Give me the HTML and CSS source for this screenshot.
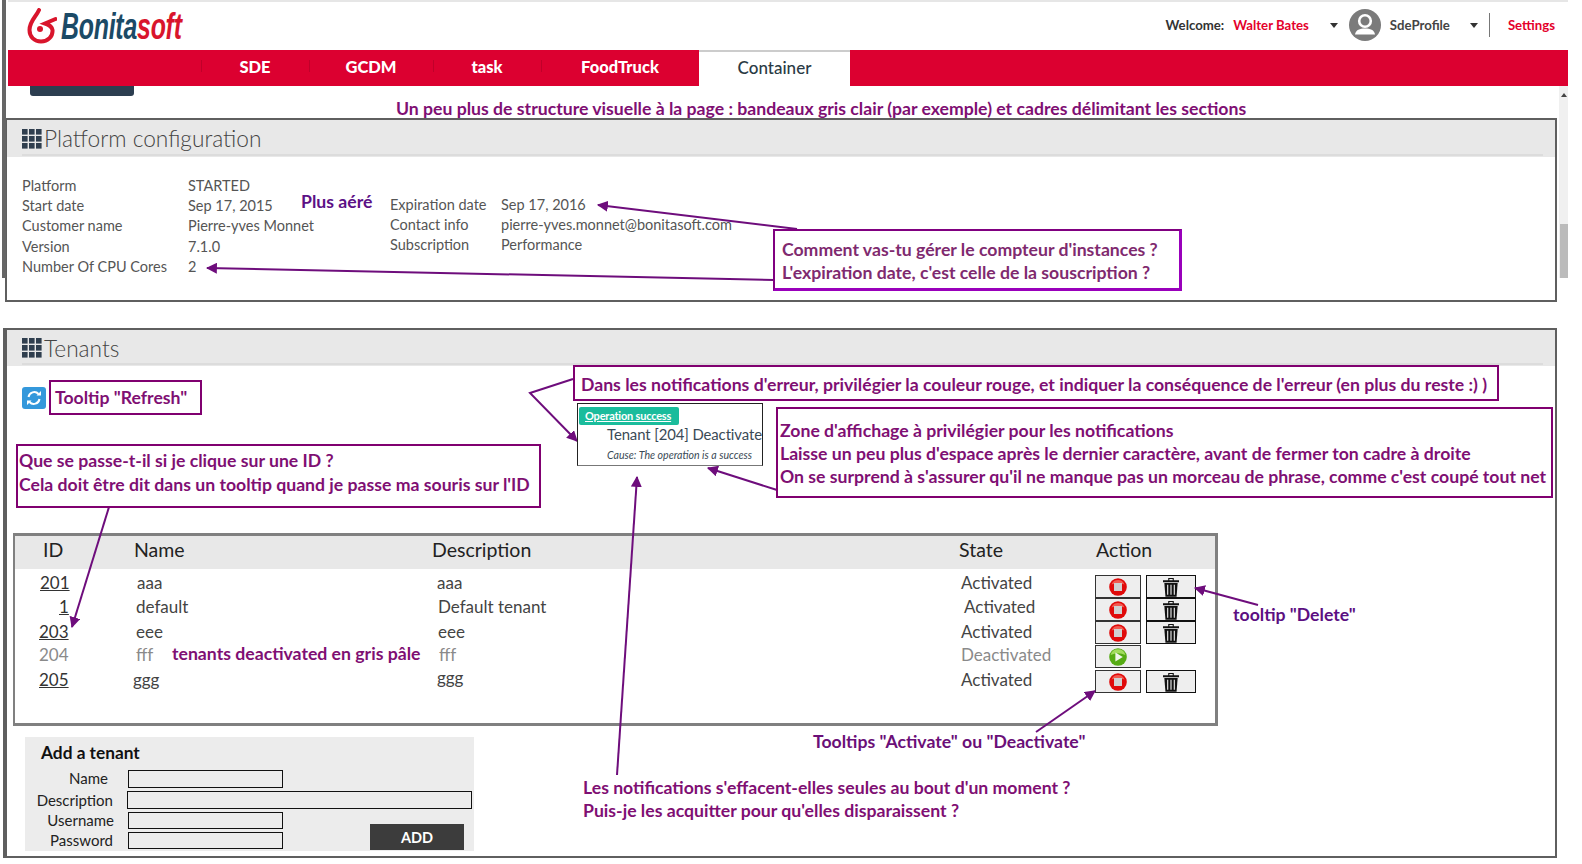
FILE: index.html
```html
<!DOCTYPE html>
<html lang="fr">
<head>
<meta charset="utf-8">
<title>Bonitasoft - Platform configuration</title>
<link rel="stylesheet" href="styles.css">
</head>
<body>
<svg class="defs" width="0" height="0" aria-hidden="true">
  <defs>
    <symbol id="grid" viewBox="0 0 20 20">
      <g fill="#2f3e4e">
        <rect x="0" y="0" width="5.6" height="5.6"/><rect x="7" y="0" width="5.6" height="5.6"/><rect x="14" y="0" width="5.6" height="5.6"/>
        <rect x="0" y="7" width="5.6" height="5.6"/><rect x="7" y="7" width="5.6" height="5.6"/><rect x="14" y="7" width="5.6" height="5.6"/>
        <rect x="0" y="14" width="5.6" height="5.6"/><rect x="7" y="14" width="5.6" height="5.6"/><rect x="14" y="14" width="5.6" height="5.6"/>
      </g>
    </symbol>
    <symbol id="stop" viewBox="0 0 18 18">
      <circle cx="9" cy="9" r="8.8" fill="#e00a0a"/>
      <path d="M2.5 6.5A7 7 0 0 1 15.5 6.5Q9 3.5 2.5 6.5Z" fill="#f25a50"/>
      <rect x="5" y="5" width="8" height="8" fill="#d0d0d0"/>
    </symbol>
    <symbol id="play" viewBox="0 0 18 18">
      <circle cx="9" cy="9" r="8.8" fill="#56ab14"/>
      <path d="M1.6 7A7.6 7.6 0 0 1 16.4 7Q9 3.6 1.6 7Z" fill="#a3dc5f"/>
      <path d="M6.4 4.4L13.8 9L6.4 13.6Z" fill="#f1f6ec"/>
    </symbol>
    <symbol id="trash" viewBox="0 0 16 18">
      <path d="M5.5 1h5v1.900h4.700v1.800H.8V2.900h4.700ZM6.500 1.800v1.100h3V1.800Z" fill="#111" fill-rule="evenodd"/>
      <path d="M2 5.400h12L13 17.800H3Z" fill="#111"/>
      <path d="M5 7v9M8 7v9M11 7v9" stroke="#ddd" stroke-width="1.100"/>
    </symbol>
    <marker id="head" viewBox="0 0 10 10" refX="9" refY="5" markerWidth="5.500" markerHeight="5.500" orient="auto-start-reverse">
      <path d="M0 0L10 5L0 10Z" fill="#6e0d7c"/>
    </marker>
  </defs>
</svg>

<div class="page">
  <header class="topbar">
    <a class="logo">
      <svg class="logo-mark" width="30" height="36" viewBox="0 0 30 36" aria-hidden="true">
        <path d="M12 2C9 9 2.500 13 2.500 22C2.500 29 7.500 33.500 14 33.500C21 33.500 26 28.500 25.500 22C25 18.500 21 16.500 18 15.500L28.500 11" fill="none" stroke="#d9152c" stroke-width="4" stroke-linecap="round"/>
        <circle cx="13" cy="21" r="3" fill="#d9152c"/>
      </svg>
      <span class="logo-text"><span class="logo-dark">Bonita</span><span class="logo-red">soft</span></span>
    </a>
    <div class="user">
      <span class="welcome">Welcome:</span>
      <span class="red-link name-link">Walter Bates</span>
      <span class="caret caret-a"></span>
      <svg class="avatar" width="32" height="32" viewBox="0 0 32 32" aria-hidden="true">
        <circle cx="16" cy="16" r="16" fill="#7b7b7b"/>
        <circle cx="16" cy="12" r="5.800" fill="none" stroke="#fff" stroke-width="2.600"/>
        <path d="M6 25.500C6.500 21 11 19.500 16 19.500S25.500 21 26 25.500Z" fill="#fff"/>
      </svg>
      <span class="profile">SdeProfile</span>
      <span class="caret caret-b"></span>
      <span class="divider"></span>
      <span class="red-link">Settings</span>
    </div>
  </header>

  <nav class="navbar">
    <a class="nav-item w-sde"><span>SDE</span></a>
    <a class="nav-item w-gcdm"><span>GCDM</span></a>
    <a class="nav-item w-task"><span>task</span></a>
    <a class="nav-item w-food"><span>FoodTruck</span></a>
    <a class="nav-tab"><span>Container</span></a>
  </nav>

  <main class="content">
    <div class="hidden-tab"></div>

    <section class="panel panel-platform">
      <h2 class="panel-head"><svg class="grid-icon"><use href="#grid"/></svg><span>Platform configuration</span></h2>
      <div class="info">
        <dl class="info-left">
          <dt>Platform</dt><dd>STARTED</dd>
          <dt>Start date</dt><dd>Sep 17, 2015</dd>
          <dt>Customer name</dt><dd>Pierre-yves Monnet</dd>
          <dt>Version</dt><dd>7.1.0</dd>
          <dt>Number Of CPU Cores</dt><dd>2</dd>
        </dl>
        <dl class="info-right">
          <dt>Expiration date</dt><dd>Sep 17, 2016</dd>
          <dt>Contact info</dt><dd>pierre-yves.monnet@bonitasoft.com</dd>
          <dt>Subscription</dt><dd>Performance</dd>
        </dl>
      </div>
    </section>

    <section class="panel panel-tenants">
      <h2 class="panel-head"><svg class="grid-icon"><use href="#grid"/></svg><span>Tenants</span></h2>
      <div class="refresh">
        <svg width="24" height="22" viewBox="0 0 24 22" aria-hidden="true">
          <rect width="24" height="22" rx="3" fill="#3498db"/>
          <path d="M6.500 10A5.800 5.800 0 0 1 16.500 7M17.500 12A5.800 5.800 0 0 1 7.500 15" fill="none" stroke="#fff" stroke-width="2"/>
          <path d="M14.500 8.500H19V4ZM9.500 13.500H5V18Z" fill="#fff"/>
        </svg>
      </div>

      <div class="table">
        <div class="thead">
          <span>ID</span><span>Name</span><span>Description</span><span>State</span><span>Action</span>
        </div>
        <div class="trow r1">
          <a class="id id-a">201</a><span class="nm-a">aaa</span><span class="ds-a">aaa</span><span class="st-a">Activated</span>
          <div class="actions"><button class="btn"><svg class="ico"><use href="#stop"/></svg></button><button class="btn del"><svg class="ico-t"><use href="#trash"/></svg></button></div>
        </div>
        <div class="trow r2">
          <a class="id id-b">1</a><span class="nm-b">default</span><span class="ds-b">Default tenant</span><span class="st-b">Activated</span>
          <div class="actions"><button class="btn"><svg class="ico"><use href="#stop"/></svg></button><button class="btn del"><svg class="ico-t"><use href="#trash"/></svg></button></div>
        </div>
        <div class="trow r3">
          <a class="id id-c">203</a><span class="nm-b">eee</span><span class="ds-b">eee</span><span class="st-c">Activated</span>
          <div class="actions"><button class="btn"><svg class="ico"><use href="#stop"/></svg></button><button class="btn del"><svg class="ico-t"><use href="#trash"/></svg></button></div>
        </div>
        <div class="trow r4 off">
          <span class="id-c">204</span><span class="nm-b">fff</span><span class="ds-c">fff</span><span class="st-a">Deactivated</span>
          <div class="actions"><button class="btn"><svg class="ico"><use href="#play"/></svg></button></div>
        </div>
        <div class="trow r5">
          <a class="id id-c">205</a><span class="nm-c">ggg</span><span class="ds-a up">ggg</span><span class="st-a">Activated</span>
          <div class="actions"><button class="btn"><svg class="ico"><use href="#stop"/></svg></button><button class="btn del"><svg class="ico-t"><use href="#trash"/></svg></button></div>
        </div>
      </div>

      <form class="add-form">
        <h3>Add a tenant</h3>
        <div class="add-grid">
          <label class="lb-name">Name</label><input class="in" type="text">
          <label class="lb-desc">Description</label><input class="in in-wide" type="text">
          <label class="lb-user">Username</label><input class="in" type="text">
          <button class="add-btn" type="button">ADD</button>
          <label class="lb-pass">Password</label><input class="in" type="password">
        </div>
      </form>
    </section>
  </main>

  <div class="stripe"></div>
  <div class="scrollbar"><span class="scroll-up"></span><span class="scroll-thumb"></span></div>

  <!-- review annotations lying over the page -->
  <svg class="arrows" width="1582" height="864" aria-hidden="true">
    <g fill="none" stroke="#6e0d7c" stroke-width="2">
      <line x1="797" y1="229" x2="598" y2="205" marker-end="url(#head)"/>
      <line x1="774" y1="280" x2="207" y2="268" marker-end="url(#head)"/>
      <polyline points="573,379 530,393 577,441" marker-end="url(#head)"/>
      <line x1="777" y1="490" x2="708" y2="468" marker-end="url(#head)"/>
      <line x1="109" y1="507" x2="72" y2="627" marker-end="url(#head)"/>
      <line x1="617" y1="775" x2="637" y2="477" marker-end="url(#head)"/>
      <line x1="1258" y1="605" x2="1195" y2="588" marker-end="url(#head)"/>
      <line x1="1036" y1="732" x2="1095" y2="691" marker-end="url(#head)"/>
    </g>
  </svg>

  <p class="note n-top">Un peu plus de structure visuelle à la page : bandeaux gris clair (par exemple) et cadres délimitant les sections</p>
  <p class="note n-aere">Plus aéré</p>
  <div class="note box n-comment"><p>Comment vas-tu gérer le compteur d'instances ?</p><p>L'expiration date, c'est celle de la souscription ?</p></div>
  <div class="note box n-refresh"><p>Tooltip "Refresh"</p></div>
  <div class="note box n-id"><p>Que se passe-t-il si je clique sur une ID ?</p><p>Cela doit être dit dans un tooltip quand je passe ma souris sur l'ID</p></div>
  <div class="note box n-err"><p>Dans les notifications d'erreur, privilégier la couleur rouge, et indiquer la conséquence de l'erreur (en plus du reste :) )</p></div>
  <div class="note box n-zone"><p>Zone d'affichage à privilégier pour les notifications</p><p>Laisse un peu plus d'espace après le dernier caractère, avant de fermer ton cadre à droite</p><p>On se surprend à s'assurer qu'il ne manque pas un morceau de phrase, comme c'est coupé tout net</p></div>
  <p class="note n-grey">tenants deactivated en gris pâle</p>
  <p class="note n-del">tooltip "Delete"</p>
  <p class="note n-act">Tooltips "Activate" ou "Deactivate"</p>
  <div class="note n-ack"><p>Les notifications s'effacent-elles seules au bout d'un moment ?</p><p>Puis-je les acquitter pour qu'elles disparaissent ?</p></div>

  <div class="toast">
    <span class="toast-title">Operation success</span>
    <p class="toast-msg">Tenant [204] Deactivate</p>
    <p class="toast-cause">Cause: The operation is a success</p>
  </div>
</div>
</body>
</html>
```
FILE: styles.css
```css
* { box-sizing: border-box; }
html, body { margin: 0; padding: 0; background: #fff; }
body { font-family: Lato, "Open Sans", sans-serif; color: #444; overflow: hidden; }
p, h2, h3, dl, dd { margin: 0; }
.defs { position: absolute; }
.page { position: relative; width: 1582px; height: 864px; overflow: hidden; }

/* top bar */
.topbar {
  height: 50px; margin-left: 8px; width: 1560px; border-top: 2px solid #e6e6e6;
  display: flex; align-items: center; justify-content: space-between; padding: 0 13px 0 19px;
}
.logo { display: flex; align-items: center; height: 48px; margin-top: -3px; }
.logo-mark { margin-top: 2px; }
.logo-text {
  font-family: "Liberation Sans", sans-serif; font-weight: 700; font-style: italic; font-size: 36px;
  display: inline-block; transform: scaleX(.69); transform-origin: 0 50%; margin-left: 4px; letter-spacing: -.3px; margin-top: 4px;
}
.logo-dark { color: #1b4a66; }
.logo-red { color: #d9152c; }

.user { display: flex; align-items: center; font-size: 13.200px; font-weight: 700; color: #333; height: 32px; margin-top: -2px; }
.welcome { margin-right: 9px; }
.red-link { color: #e4002b; }
.caret { width: 0; height: 0; border: 4px solid transparent; border-top: 5px solid #333; border-bottom: 0; }
.caret-a { margin-left: 21px; margin-right: 11px; }
.caret-b { margin-left: 20px; margin-right: 11px; }
.profile { margin-left: 9px; color: #444; }
.divider { width: 1px; height: 24px; background: #777; margin-right: 18px; }

/* nav */
.navbar { height: 36px; margin-left: 8px; width: 1560px; background: #dc0030; display: flex; padding-left: 193px; }
.nav-item { display: flex; align-items: center; justify-content: center; color: #fff; font-weight: 900; font-size: 16.500px; position: relative; padding-bottom: 2px; }
.nav-item::before { content: ""; position: absolute; left: 0; top: 10px; height: 12px; width: 1px; background: #c0002a; }
.w-sde { width: 108px; }
.w-gcdm { width: 124px; }
.w-task { width: 108px; }
.w-food { width: 158px; }
.nav-tab { width: 151px; background: #fff; border-top: 2px solid #ccc; display: flex; align-items: center; justify-content: center; font-size: 17px; font-weight: 500; color: #2a3a44; padding-bottom: 3px; }

/* content */
.content { padding-left: 3px; }
.hidden-tab { width: 104px; height: 10px; margin-left: 27px; background: #2c3e50; border-radius: 0 0 3px 3px; }
.panel { width: 1554px; background: #fff; border: 2px solid #5f5f5f; }
.panel-platform { margin-top: 22px; margin-left: 2px; width: 1552px; height: 184px; }
.panel-tenants { margin-top: 26px; border-left-width: 4px; height: 530px; }
.panel-head {
  height: 36px; font-weight: 300; font-size: 22.700px; color: #444; display: flex; align-items: center; padding-left: 15px;
  background: linear-gradient(#dcdcdc, #dcdcdc) no-repeat 15px calc(100% - 1px) / 1521px 2px, #e8e8e8;
}
.grid-icon { width: 20px; height: 20px; margin-right: 2px; }
.panel-platform .panel-head { height: 37px; }

.info { display: flex; padding: 19px 0 0 15px; font-size: 14.500px; line-height: 20.200px; color: #555; }
.info-left { width: 368px; display: grid; grid-template-columns: 166px 1fr; align-content: start; }
.info-right { margin-top: 19px; display: grid; grid-template-columns: 111px 1fr; align-content: start; }

.refresh { margin: 21px 0 0 15px; height: 22px; }
.refresh svg { display: block; }

/* table */
.table { margin: 124px 0 0 6px; width: 1205px; height: 193px; border: 3px solid #808080; border-left-width: 2px; font-size: 17px; line-height: 20px; color: #444; }
.thead, .trow { display: grid; grid-template-columns: 116px 298px 527px 137px 1fr; padding-left: 3px; }
.thead { height: 33px; background: #e8e8e8; align-items: center; font-size: 19.500px; color: #222; margin-bottom: 6px; padding-bottom: 5px; }
.thead span:first-child { padding-left: 25px; }
.trow { height: 23px; }
.trow > span, .trow > a { margin-top: var(--t); }
.r1 { --t: -2px; }
.r2 { --t: -1px; }
.r3 { --t: 1px; height: 24px; }
.r4 { --t: 0px; height: 25px; }
.r5 { --t: 0px; }
.off { color: #8a8a8a; }
.id { text-decoration: underline; color: #333; }
.id-a { padding-left: 22px; }
.id-b { padding-left: 41px; }
.id-c { padding-left: 21px; }
.nm-a { padding-left: 3px; }
.nm-b { padding-left: 2px; }
.nm-c { margin-left: -1px; }
.ds-a { padding-left: 5px; }
.ds-b { padding-left: 6px; }
.ds-c { padding-left: 7px; }
.up { margin-top: -2px !important; }
.st-a { padding-left: 2px; }
.st-b { padding-left: 5px; }
.st-c { padding-left: 2px; }
.actions { display: flex; gap: 5px; margin-left: -1px; }
.btn { width: 46px; height: 23px; padding: 0; background: #eee; border: 1px solid #333; display: flex; align-items: center; justify-content: center; }
.btn.del { width: 50px; border-color: #111; border-width: 1.500px; }
.ico { width: 18px; height: 18px; }
.ico-t { width: 18px; height: 20px; }

/* add form */
.add-form { margin: 11px 0 0 18px; width: 449px; height: 114px; background: #ececec; color: #222; }
.add-form h3 { height: 33px; margin: 0; padding: 5px 0 0 16px; font-size: 17.300px; line-height: 22px; font-weight: 700; color: #111; }
.add-grid { display: grid; grid-template-columns: 103px 155px 87px 94px; grid-template-rows: 18px 18px 17px 17px; row-gap: 3px; font-size: 15px; line-height: 17px; }
.add-grid label { grid-column: 1; text-align: right; }
.lb-name { padding-right: 20px; }
.lb-desc { padding-right: 15px; margin-top: 1px; }
.lb-user { padding-right: 14px; }
.lb-pass { padding-right: 15px; grid-row: 4; }
.in { grid-column: 2; height: 100%; background: #ececec; border: 1px solid #111; padding: 0; margin: 0; display: block; }
.in-wide { grid-column: 2 / 5; margin-left: -1px; width: 345px; }
.add-btn { grid-column: 4; grid-row: 3 / 5; align-self: end; height: 26px; margin: 0 0 -1px; background: #3c3c3c; border: 0; color: #fff; font: 700 14.500px Lato, sans-serif; }

/* chrome bits */
.stripe { position: absolute; left: 2px; top: 0; width: 4px; height: 278px; background: #666; }
.scrollbar { position: absolute; left: 1559px; top: 86px; width: 9px; height: 192px; background: #f0f0f0; }
.scroll-up { position: absolute; left: 2px; top: 7px; width: 0; height: 0; border: 3px solid transparent; border-bottom: 4px solid #444; border-top: 0; }
.scroll-thumb { position: absolute; left: 1px; right: 0; bottom: 0; height: 54px; background: #bbb; }

/* annotations */
.arrows { position: absolute; left: 0; top: 0; pointer-events: none; }
.note { position: absolute; margin: 0; font-weight: 700; font-size: 17.650px; color: #7f0f73; white-space: nowrap; }
.box { border: 2px solid #800070; background: #fff; }
.n-top { left: 396px; top: 99px; line-height: 20px; }
.n-aere { left: 301px; top: 192px; line-height: 20px; color: #5c1186; }
.n-comment { left: 773px; top: 229px; width: 409px; height: 62px; padding: 7px 0 0 7px; line-height: 23px; color: #7f2a6f; border-color: #800080 #9900bb #9900bb #800080; border-width: 2px 3px 3px 2px; }
.n-refresh { left: 49px; top: 380px; width: 153px; height: 35px; padding: 5px 0 0 4px; line-height: 22px; }
.n-id { left: 16px; top: 444px; width: 525px; height: 64px; padding: 3px 0 0 1px; line-height: 23.500px; }
.n-err { left: 573px; top: 365px; width: 926px; height: 36px; padding: 7px 0 0 6px; line-height: 22px; }
.n-zone { left: 776px; top: 407px; width: 777px; height: 91px; padding: 10px 0 0 2px; line-height: 23px; }
.n-grey { left: 172px; top: 644px; line-height: 20px; }
.n-del { left: 1233px; top: 605px; line-height: 20px; color: #5c0f82; }
.n-act { left: 813px; top: 732px; line-height: 20px; color: #6b0f78; }
.n-ack { left: 583px; top: 776px; line-height: 23px; }

/* toast */
.toast { position: absolute; left: 577px; top: 403px; width: 186px; height: 63px; background: #fff; border: 1px solid #222; border-bottom-color: #777; padding: 3px 0 0 1px; color: #3a4a56; }
.toast-title { display: block; width: 100px; height: 18px; background: #1abc9c; border-radius: 2px; color: #fff; font-size: 11px; font-weight: 700; line-height: 18px; padding-left: 6px; text-decoration: underline; letter-spacing: -.2px; }
.toast-msg { margin: -1px 0 0 28px; font-size: 14.900px; line-height: 20px; white-space: nowrap; letter-spacing: -.1px; }
.toast-cause { margin: 5px 0 0 28px; font-size: 10.600px; line-height: 13px; font-style: italic; white-space: nowrap; }
```
